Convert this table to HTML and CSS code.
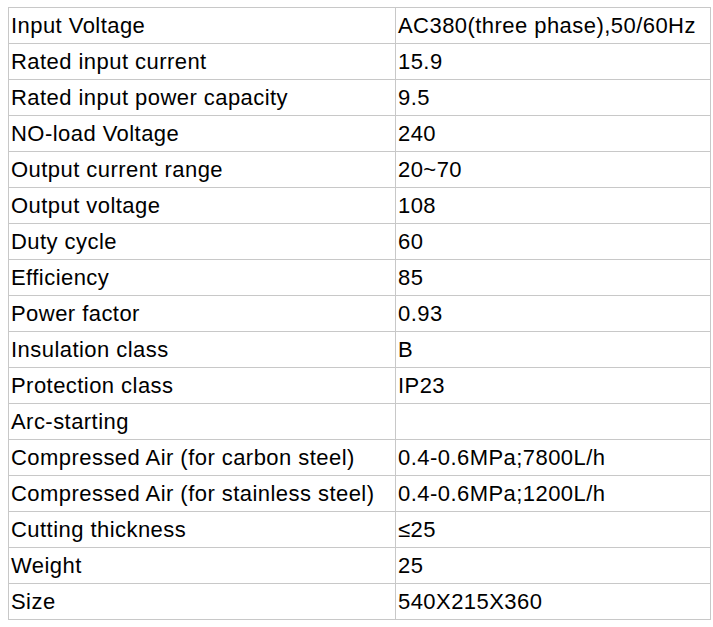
FILE: index.html
```html
<!DOCTYPE html>
<html>
<head>
<meta charset="utf-8">
<link rel="stylesheet" href="styles.css">
</head>
<body>
<table class="spec">
  <colgroup><col class="c1"><col class="c2"></colgroup>
  <tbody>
    <tr><td>Input Voltage</td><td>AC380(three phase),50/60Hz</td></tr>
    <tr><td>Rated input current</td><td>15.9</td></tr>
    <tr><td>Rated input power capacity</td><td>9.5</td></tr>
    <tr><td>NO-load Voltage</td><td>240</td></tr>
    <tr><td>Output current range</td><td>20~70</td></tr>
    <tr><td>Output voltage</td><td>108</td></tr>
    <tr><td>Duty cycle</td><td>60</td></tr>
    <tr><td>Efficiency</td><td>85</td></tr>
    <tr><td>Power factor</td><td>0.93</td></tr>
    <tr><td>Insulation class</td><td>B</td></tr>
    <tr><td>Protection class</td><td>IP23</td></tr>
    <tr><td>Arc-starting</td><td></td></tr>
    <tr><td>Compressed Air (for carbon steel)</td><td>0.4-0.6MPa;7800L/h</td></tr>
    <tr><td>Compressed Air (for stainless steel)</td><td>0.4-0.6MPa;1200L/h</td></tr>
    <tr><td>Cutting thickness</td><td>≤25</td></tr>
    <tr><td>Weight</td><td>25</td></tr>
    <tr><td>Size</td><td>540X215X360</td></tr>
  </tbody>
</table>
</body>
</html>
```
FILE: styles.css
```css
html, body {
  background: #ffffff;
}
body {
  margin: 7px 0 0 8px;
  font-family: "Liberation Sans", Arial, sans-serif;
  color: #000000;
}
.spec {
  border-collapse: collapse;
  table-layout: fixed;
  width: 703px;
}
.spec .c1 { width: 387px; }
.spec td {
  border: 1px solid #c8c8c8;
  font-size: 22px;
  letter-spacing: 0.45px;
  line-height: 25px;
  height: 25px;
  padding: 5px 2px 5px 2px;
  white-space: nowrap;
  vertical-align: top;
}
```
